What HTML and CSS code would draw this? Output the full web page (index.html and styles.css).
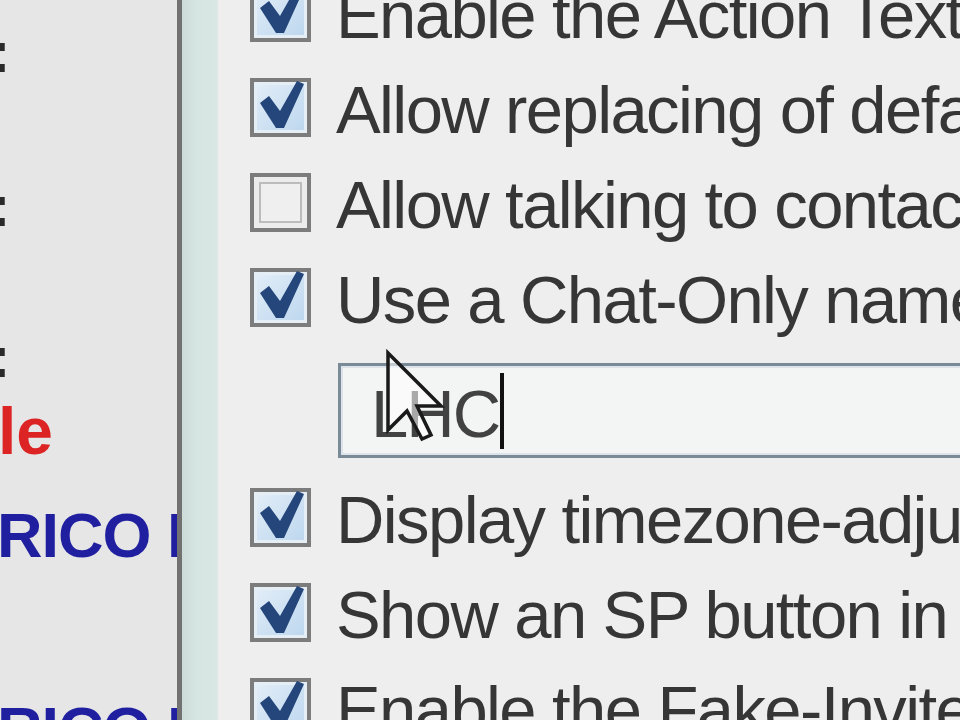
FILE: index.html
```html
<!DOCTYPE html>
<html>
<head>
<meta charset="utf-8">
<link rel="stylesheet" href="styles.css">
</head>
<body>
<div class="screen">
  <div class="left">
    <div class="lbl colon c1">:</div>
    <div class="lbl colon c2">:</div>
    <div class="lbl colon c3">:</div>
    <div class="lbl red">le</div>
    <div class="lbl blue b1">RICO I</div>
    <div class="lbl blue b2">RICO I</div>
  </div>
  <div class="divider"></div>
  <div class="strip"></div>
  <div class="right">
    <div class="row first">
      <div class="cb on"><svg class="tick" viewBox="0 0 61 59"><polygon points="10,25 19,18 30,33 47,3 54,6 34,50 26,50"/></svg></div>
      <div class="label">Enable the Action Text commands</div>
    </div>
    <div class="row">
      <div class="cb on"><svg class="tick" viewBox="0 0 61 59"><polygon points="10,25 19,18 30,33 47,3 54,6 34,50 26,50"/></svg></div>
      <div class="label">Allow replacing of default</div>
    </div>
    <div class="row">
      <div class="cb off"><div class="cb-inner"></div></div>
      <div class="label">Allow talking to contacts</div>
    </div>
    <div class="row">
      <div class="cb on"><svg class="tick" viewBox="0 0 61 59"><polygon points="10,25 19,18 30,33 47,3 54,6 34,50 26,50"/></svg></div>
      <div class="label">Use a Chat-Only name</div>
    </div>
    <div class="field"><span class="field-text">LHC</span><span class="caret"></span></div>
    <div class="row">
      <div class="cb on"><svg class="tick" viewBox="0 0 61 59"><polygon points="10,25 19,18 30,33 47,3 54,6 34,50 26,50"/></svg></div>
      <div class="label">Display timezone-adjusted</div>
    </div>
    <div class="row">
      <div class="cb on"><svg class="tick" viewBox="0 0 61 59"><polygon points="10,25 19,18 30,33 47,3 54,6 34,50 26,50"/></svg></div>
      <div class="label">Show an SP button in chat</div>
    </div>
    <div class="row">
      <div class="cb on"><svg class="tick" viewBox="0 0 61 59"><polygon points="10,25 19,18 30,33 47,3 54,6 34,50 26,50"/></svg></div>
      <div class="label">Enable the Fake-Invite</div>
    </div>
  </div>
  <svg class="cursor" viewBox="-3 -3 62 96" width="62" height="96">
    <polygon points="0,0 0,77 19,58 34,86 43,82 29,53 53,53" />
  </svg>
</div>
</body>
</html>
```
FILE: styles.css
```css
html, body {
  margin: 0;
  padding: 0;
}
body {
  width: 960px;
  height: 720px;
  overflow: hidden;
}
.screen {
  position: relative;
  width: 960px;
  height: 720px;
  display: flex;
  overflow: hidden;
}
.left {
  width: 177px;
  flex: none;
  background: #e6e6e6;
  overflow: hidden;
  font-family: "Liberation Sans", Arial, sans-serif;
  font-weight: bold;
  font-size: 63px;
}
.lbl {
  height: 63px;
  line-height: 63px;
  white-space: nowrap;
}
.colon {
  color: #2a2a2a;
  font-size: 58px;
  margin-left: -9px;
}
.c1 { margin-top: 20px; }
.c2 { margin-top: 91px; }
.c3 { margin-top: 88px; }
.red {
  color: #dc2424;
  margin-top: 12px;
  margin-left: -2px;
  font-size: 66px;
}
.blue {
  color: #1f1fa0;
  margin-left: -3px;
  letter-spacing: -1px;
}
.b1 { margin-top: 41px; }
.b2 { margin-top: 131px; }
.divider {
  width: 5px;
  flex: none;
  background: #727272;
}
.strip {
  width: 36px;
  flex: none;
  background: linear-gradient(90deg, #cddcd9 0%, #d5e5e1 40%, #d8e7e4 90%, #dde7e6 100%);
}
.right {
  flex: 1;
  background: #eeeeee;
  padding-left: 32px;
  overflow: hidden;
  font-family: "Liberation Sans", Arial, sans-serif;
  font-size: 67px;
  color: #363636;
}
.row {
  height: 95px;
  display: flex;
  align-items: flex-start;
  white-space: nowrap;
}
.row.first {
  margin-top: -17px;
}
.cb {
  position: relative;
  width: 61px;
  height: 59px;
  flex: none;
  box-sizing: border-box;
  border: 4px solid #7c7c7c;
}
.cb.on {
  background: linear-gradient(135deg, #e4eef8 0%, #cfe2f3 50%, #bcd6ee 100%);
  box-shadow: inset 0 0 0 3px #e6eef5;
}
.cb.off {
  background: #ececec;
  padding: 5px;
}
.cb-inner {
  height: 100%;
  box-sizing: border-box;
  border: 2px solid #bcbcbc;
  background: #efefef;
}
.tick {
  position: absolute;
  left: -4px;
  top: -4px;
  width: 61px;
  height: 59px;
  fill: #24467a;
}
.label {
  margin-left: 25px;
  line-height: 59px;
  padding-top: 2px;
  letter-spacing: -1.6px;
}
.field {
  margin-left: 88px;
  width: 700px;
  height: 95px;
  box-sizing: border-box;
  border: 3px solid #7b8a97;
  box-shadow: inset 0 0 0 2px #dce3ea;
  background: #f3f4f4;
  margin-bottom: 30px;
  display: flex;
  align-items: center;
  padding-left: 30px;
  padding-top: 6px;
  color: #424242;
  letter-spacing: -2px;
}
.field-text {
  line-height: 70px;
}
.caret {
  width: 4px;
  height: 76px;
  background: #111111;
  margin-left: 1px;
  margin-top: -6px;
}
.cursor {
  position: absolute;
  left: 385px;
  top: 350px;
  overflow: visible;
}
.cursor polygon {
  fill: rgba(255, 255, 255, 0.55);
  stroke: #1a1a1a;
  stroke-width: 3.5;
  stroke-linejoin: miter;
}
```
